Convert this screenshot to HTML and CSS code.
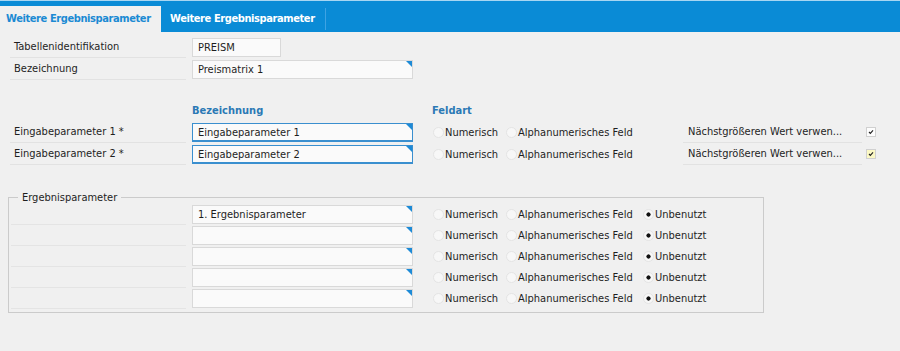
FILE: index.html
```html
<!DOCTYPE html>
<html lang="de">
<head>
    <meta charset="UTF-8">
    <title>Weitere Ergebnisparameter</title>
    <link rel="stylesheet" href="styles.css">
</head>
<body>
<div class="tabbar">
    <div class="tab active">Weitere Ergebnisparameter</div>
    <div class="tab">Weitere Ergebnisparameter</div>
</div>

<div class="content">
    <div class="row">
        <div class="label">Tabellenidentifikation</div>
        <div class="field short">PREISM</div>
    </div>
    <div class="row">
        <div class="label">Bezeichnung</div>
        <div class="field f4">Preismatrix 1</div>
    </div>

    <div class="heads">
        <span class="head-name">Bezeichnung</span>
        <span>Feldart</span>
    </div>

    <div class="row">
        <div class="label">Eingabeparameter 1 *</div>
        <div class="field f4 active">Eingabeparameter 1</div>
        <div class="radios">
            <label class="opt num"><span class="radio"></span>Numerisch</label>
            <label class="opt alpha"><span class="radio"></span>Alphanumerisches Feld</label>
        </div>
        <div class="check-label">Nächstgrößeren Wert verwen...</div>
        <span class="check">
            <svg viewBox="0 0 10 10"><polyline points="2.5,5 4.2,6.8 7.5,3" fill="none" stroke="#222" stroke-width="1.4"/></svg>
        </span>
    </div>
    <div class="row">
        <div class="label">Eingabeparameter 2 *</div>
        <div class="field f4 active">Eingabeparameter 2</div>
        <div class="radios">
            <label class="opt num"><span class="radio"></span>Numerisch</label>
            <label class="opt alpha"><span class="radio"></span>Alphanumerisches Feld</label>
        </div>
        <div class="check-label">Nächstgrößeren Wert verwen...</div>
        <span class="check hint">
            <svg viewBox="0 0 10 10"><polyline points="2.5,5 4.2,6.8 7.5,3" fill="none" stroke="#222" stroke-width="1.4"/></svg>
        </span>
    </div>

    <fieldset class="group">
        <legend>Ergebnisparameter</legend>
        <div class="row small">
            <div class="label"></div>
            <div class="field f4">1. Ergebnisparameter</div>
            <div class="radios">
                <label class="opt num"><span class="radio"></span>Numerisch</label>
                <label class="opt alpha"><span class="radio"></span>Alphanumerisches Feld</label>
                <label class="opt"><span class="radio on"></span>Unbenutzt</label>
            </div>
        </div>
        <div class="row small">
            <div class="label"></div>
            <div class="field f4"></div>
            <div class="radios">
                <label class="opt num"><span class="radio"></span>Numerisch</label>
                <label class="opt alpha"><span class="radio"></span>Alphanumerisches Feld</label>
                <label class="opt"><span class="radio on"></span>Unbenutzt</label>
            </div>
        </div>
        <div class="row small">
            <div class="label"></div>
            <div class="field f4"></div>
            <div class="radios">
                <label class="opt num"><span class="radio"></span>Numerisch</label>
                <label class="opt alpha"><span class="radio"></span>Alphanumerisches Feld</label>
                <label class="opt"><span class="radio on"></span>Unbenutzt</label>
            </div>
        </div>
        <div class="row small">
            <div class="label"></div>
            <div class="field f4"></div>
            <div class="radios">
                <label class="opt num"><span class="radio"></span>Numerisch</label>
                <label class="opt alpha"><span class="radio"></span>Alphanumerisches Feld</label>
                <label class="opt"><span class="radio on"></span>Unbenutzt</label>
            </div>
        </div>
        <div class="row small">
            <div class="label"></div>
            <div class="field f4"></div>
            <div class="radios">
                <label class="opt num"><span class="radio"></span>Numerisch</label>
                <label class="opt alpha"><span class="radio"></span>Alphanumerisches Feld</label>
                <label class="opt"><span class="radio on"></span>Unbenutzt</label>
            </div>
        </div>
    </fieldset>
</div>
</body>
</html>
```

FILE: styles.css
```css
/* Reset */
* {
    margin: 0;
    padding: 0;
    box-sizing: border-box;
}

body {
    font-family: "DejaVu Sans Condensed", "DejaVu Sans", "Liberation Sans", sans-serif;
    font-stretch: condensed;
    font-size: 11px;
    color: #1e1e1e;
    background: #f0f0f0;
    width: 900px;
    height: 351px;
    overflow: hidden;
}

/* Tabs */
.tabbar {
    height: 32px;
    background: #0a8bd6;
    border-top: 1px solid #a8d6f2;
    display: flex;
    align-items: flex-end;
}

.tab {
    height: 22px;
    line-height: 22px;
    margin-bottom: 2px;
    padding: 0 10px 0 9px;
    font-weight: bold;
    letter-spacing: -0.4px;
    white-space: nowrap;
    color: #fff;
    border-right: 1px solid #3fa3e3;
}

.tab.active {
    min-width: 161px;
    height: 26px;
    line-height: 26px;
    margin-bottom: 0;
    padding: 0 6px;
    border-right: none;
    background: #f0f0f0;
    color: #1b8ad3;
}

/* Form */
.content {
    padding: 4px 0 0 10px;
}

.row {
    display: flex;
    align-items: center;
    height: 22px;
}

.label {
    width: 176px;
    height: 22px;
    line-height: 21px;
    padding-left: 4px;
    border-bottom: 1px solid #e2e2e2;
}

.field {
    position: relative;
    margin-left: 6px;
    width: 221px;
    height: 19px;
    line-height: 17px;
    padding-left: 5px;
    background: #fafafa;
    border: 1px solid #d9d9d9;
}

.field.short {
    width: 89px;
}

.field.active {
    border-color: #3a8fcf;
    border-bottom-width: 2px;
}

/* blue corner marker */
.field.f4::after {
    content: "";
    position: absolute;
    top: 0;
    right: 0;
    border-style: solid;
    border-width: 0 6px 6px 0;
    border-color: transparent #1d8ad6 transparent transparent;
}

.heads {
    display: flex;
    align-items: center;
    height: 22px;
    margin-top: 19px;
    padding-left: 182px;
    font-weight: bold;
    color: #2b79b5;
}

.head-name {
    width: 240px;
}

/* Radio buttons */
.radios {
    display: flex;
    align-items: center;
    margin-left: 20px;
    width: 250px;
}

.opt {
    display: flex;
    align-items: center;
    gap: 1px;
    white-space: nowrap;
}

.opt.num {
    width: 73px;
}

.opt.alpha {
    width: 137px;
}

.radio {
    width: 11px;
    height: 11px;
    border-radius: 50%;
    border: 1px solid #e4e4e4;
    background: #f7f7f7;
}

.radio.on {
    background: radial-gradient(circle, #111 0 1.8px, #f7f7f7 2.4px);
}

/* Checkbox */
.check-label {
    width: 179px;
    height: 22px;
    line-height: 21px;
    padding-left: 5px;
    border-bottom: 1px solid #e2e2e2;
}

.check {
    display: flex;
    width: 10px;
    height: 10px;
    margin-left: 4px;
    border: 1px solid #d0d0d0;
    background: #fdfdfd;
}

.check.hint {
    background: #fbf8c4;
}

.check svg {
    width: 8px;
    height: 8px;
}

/* Result group */
.group {
    width: 756px;
    margin: 26px 0 0 -2px;
    padding: 0 0 3px 2px;
    border: 1px solid #cbcbcb;
}

.group legend {
    margin-left: 7px;
    padding: 0 4px;
    line-height: 13px;
}

.row.small {
    height: 21px;
}

.row.small .label {
    width: 175px;
    height: 21px;
    border-bottom-color: #e4e4e4;
}

.row.small .radios {
    width: auto;
}
```
